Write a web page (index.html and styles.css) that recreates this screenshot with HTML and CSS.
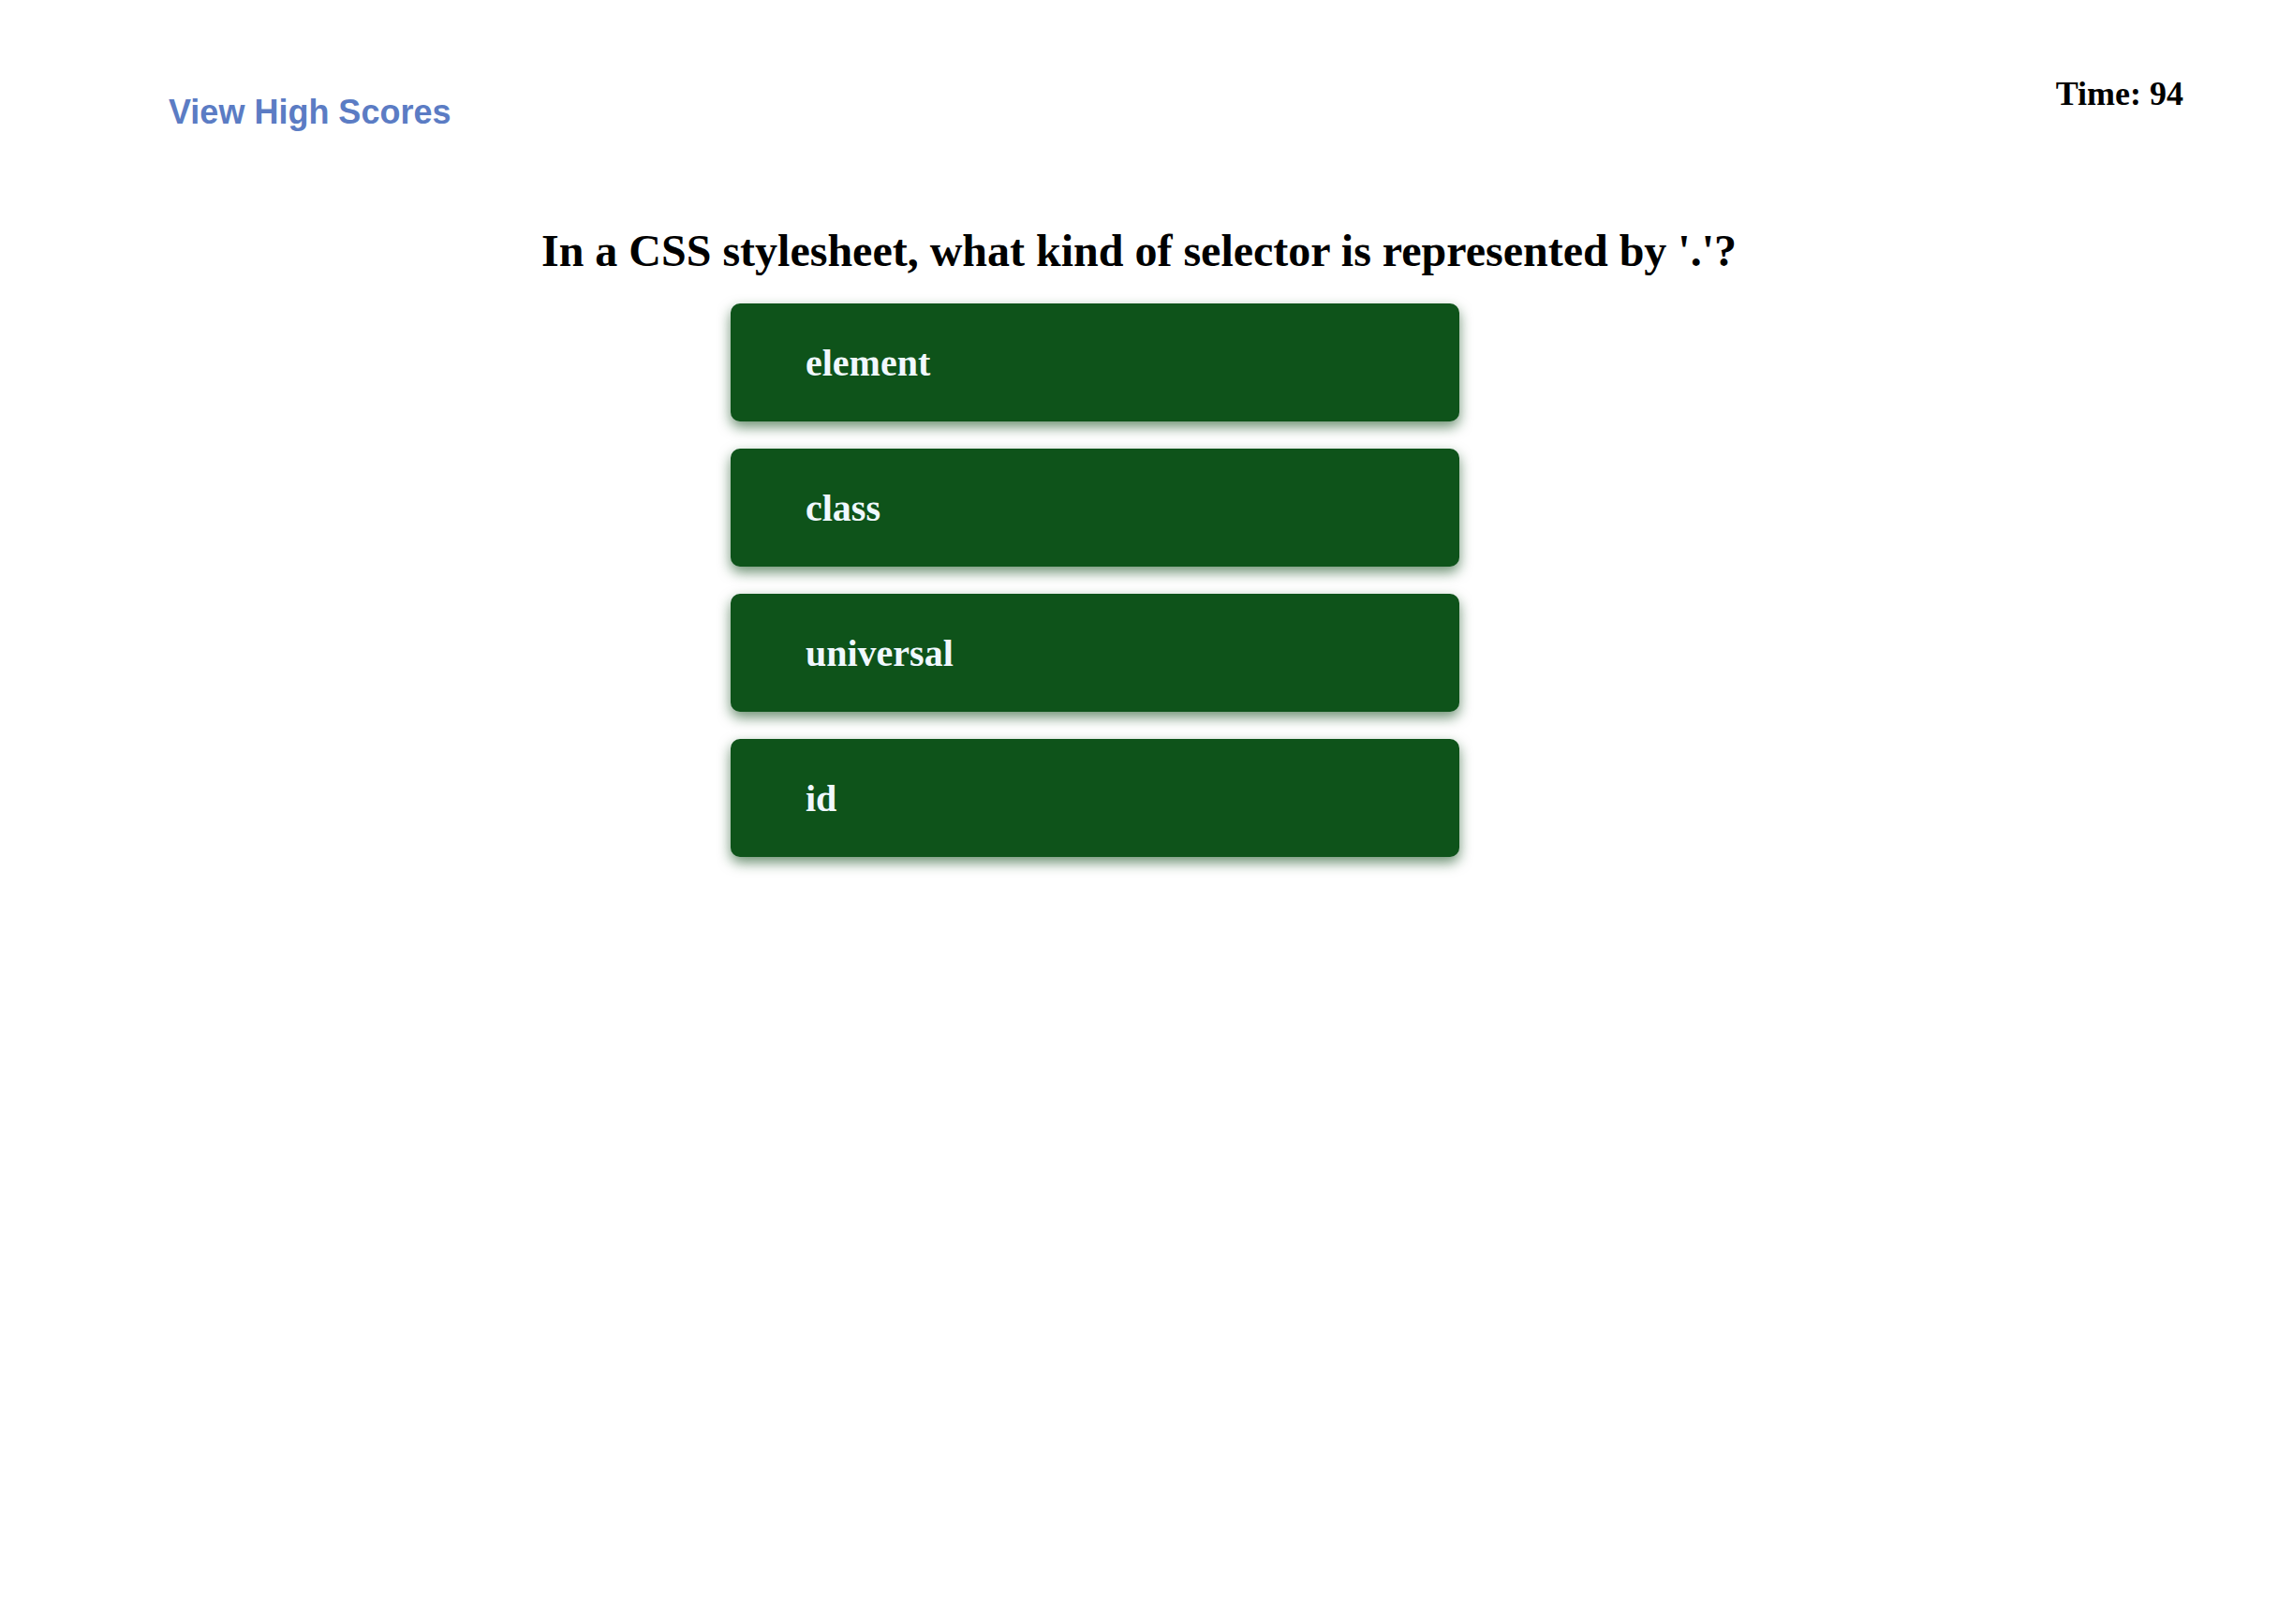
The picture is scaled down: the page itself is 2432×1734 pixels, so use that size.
FILE: index.html
```html
<!DOCTYPE html>
<html lang="en">
<head>
<meta charset="utf-8">
<title>Code Quiz</title>
<link rel="stylesheet" href="styles.css">
</head>
<body>
<header class="top-bar">
  <a class="high-scores" href="#">View High Scores</a>
  <div class="timer">Time: 94</div>
</header>
<main class="quiz">
  <h1 class="question">In a CSS stylesheet, what kind of selector is represented by '.'?</h1>
  <div class="answers">
    <button class="answer">element</button>
    <button class="answer">class</button>
    <button class="answer">universal</button>
    <button class="answer">id</button>
  </div>
</main>
</body>
</html>
```

FILE: styles.css
```css
html, body {
  margin: 0;
  padding: 0;
  background: #ffffff;
}

body {
  font-family: "Liberation Serif", "Times New Roman", serif;
  color: #000;
}

.top-bar {
  display: flex;
  justify-content: space-between;
  align-items: flex-start;
  padding: 79px 101px 0 180px;
}

.high-scores {
  margin-top: 20px;
  font-family: "Liberation Sans", Arial, sans-serif;
  font-weight: bold;
  font-size: 36px;
  color: #5b7cc4;
  text-decoration: none;
}

.timer {
  font-weight: bold;
  font-size: 36px;
}

.quiz {
  display: flex;
  flex-direction: column;
  padding-bottom: 40px;
}

.question {
  margin: 99px 0 29px;
  text-align: center;
  font-size: 48px;
  font-weight: bold;
}

.answers {
  display: flex;
  flex-direction: column;
  gap: 29px;
  margin-left: 780px;
  width: 778px;
}

.answer {
  display: block;
  box-sizing: border-box;
  width: 100%;
  padding: 40px 80px 39px;
  border: none;
  border-radius: 10px;
  background: #0e531a;
  color: #f0f8ff;
  font-family: "Liberation Serif", "Times New Roman", serif;
  font-weight: bold;
  font-size: 40px;
  text-align: left;
  box-shadow: 0 6px 14px rgba(10, 70, 20, 0.6);
  cursor: pointer;
}
```
